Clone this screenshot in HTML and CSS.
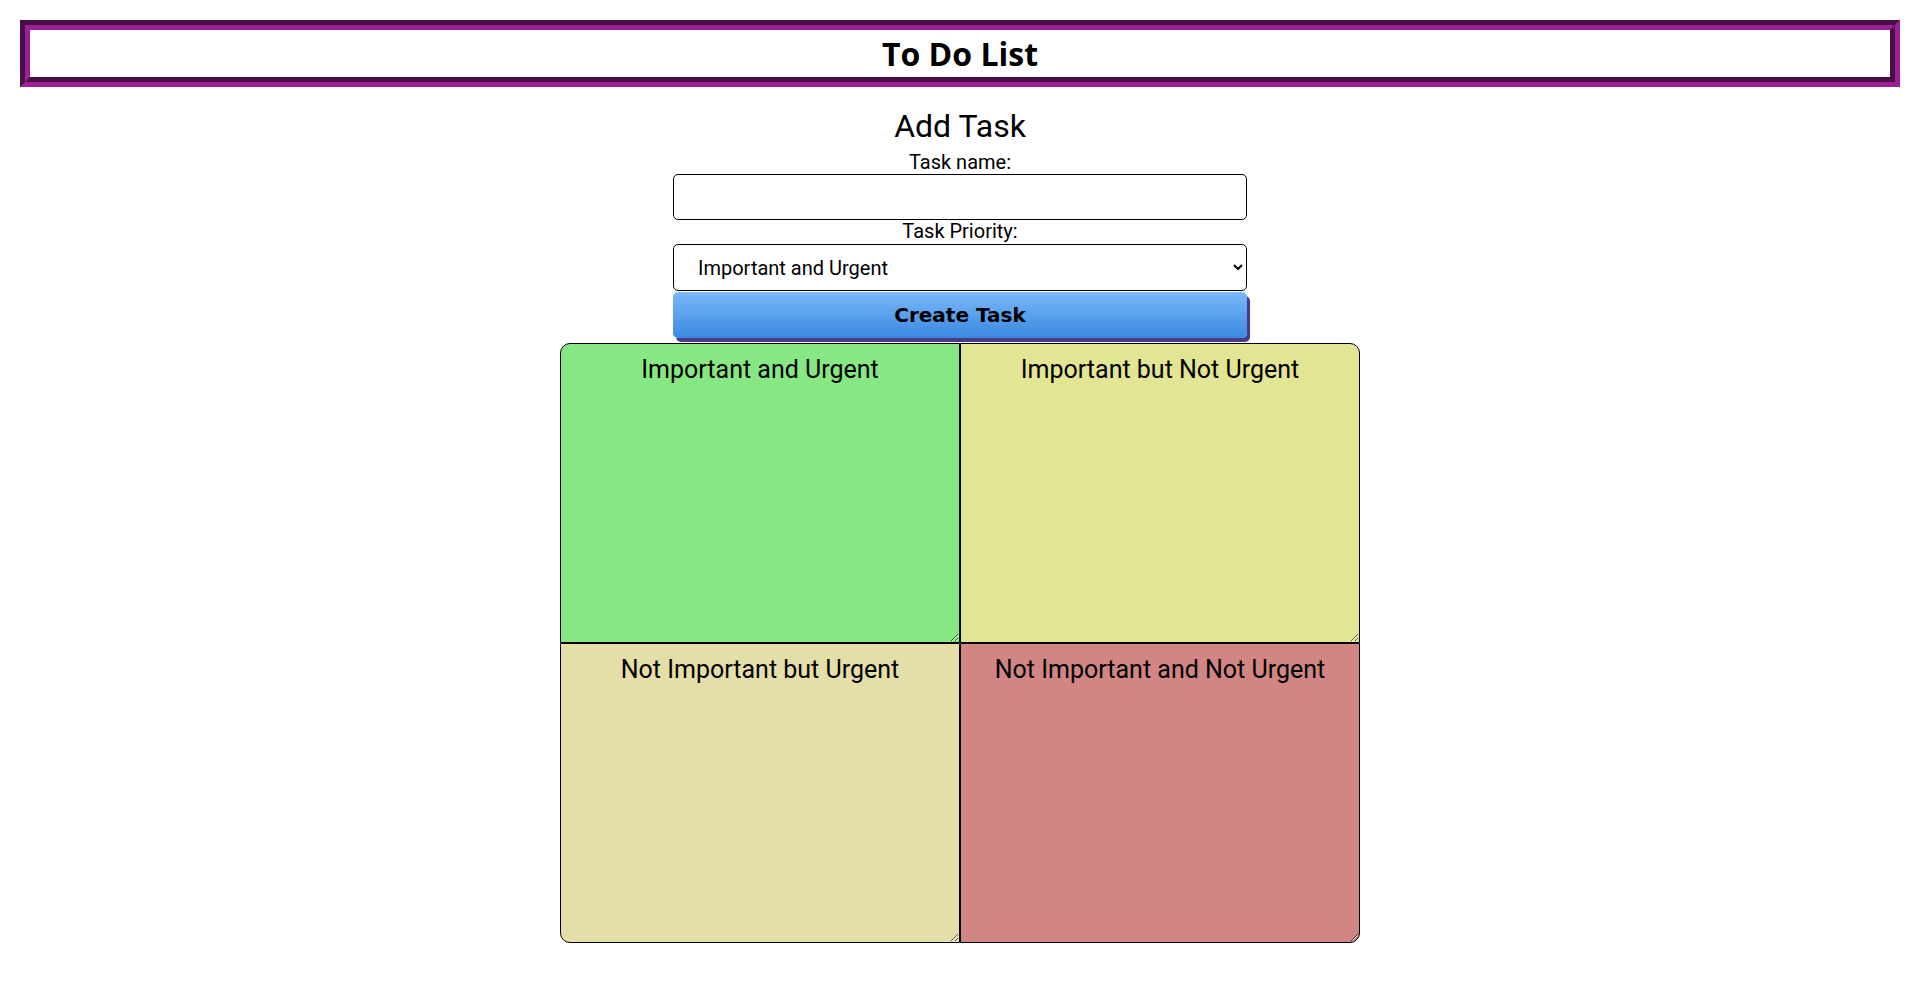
FILE: index.html
```html
<!DOCTYPE html>
<html lang="en">
<head>
<meta charset="utf-8">
<title>To Do List</title>
<link rel="stylesheet" href="styles.css">
</head>
<body>
<header class="site-header">
  <h1 class="site-title">To Do List</h1>
</header>
<main class="page">
  <form class="task-form">
    <h2 class="form-title">Add Task</h2>
    <label class="form-label" for="task-name">Task name:</label>
    <input class="form-input" id="task-name" type="text">
    <label class="form-label" for="task-priority">Task Priority:</label>
    <select class="form-select" id="task-priority">
      <option>Important and Urgent</option>
      <option>Important but Not Urgent</option>
      <option>Not Important but Urgent</option>
      <option>Not Important and Not Urgent</option>
    </select>
    <button class="form-button" type="button">Create Task</button>
  </form>
  <section class="matrix">
    <div class="quadrant q-iu"><h3 class="quadrant-title">Important and Urgent</h3></div>
    <div class="quadrant q-inu"><h3 class="quadrant-title">Important but Not Urgent</h3></div>
    <div class="quadrant q-niu"><h3 class="quadrant-title">Not Important but Urgent</h3></div>
    <div class="quadrant q-ninu"><h3 class="quadrant-title">Not Important and Not Urgent</h3></div>
  </section>
</main>
</body>
</html>
```

FILE: styles.css
```css
html, body {
  background: #ffffff;
}

body {
  margin: 20px;
  font-family: Roboto, "Liberation Sans", sans-serif;
  font-size: 20px;
  color: #000000;
}

.site-header {
  border: 10px groove #9c1f97;
  text-align: center;
}

.site-title {
  margin: 0;
  font-family: "Open Sans", "Noto Sans", sans-serif;
  font-weight: 700;
  font-size: 32px;
  line-height: 47px;
}

.page {
  display: flex;
  flex-direction: column;
  align-items: center;
}

.task-form {
  display: flex;
  flex-direction: column;
  align-items: center;
  width: 574px;
}

.form-title {
  margin: 22px 0 7px;
  font-size: 32px;
  font-weight: 400;
  line-height: 35px;
}

.form-label {
  display: block;
  line-height: 23px;
  height: 23px;
}

.form-input {
  box-sizing: border-box;
  width: 100%;
  height: 46px;
  margin: 0;
  border: 1px solid #000000;
  border-radius: 5px;
  background: #ffffff;
  font-family: Roboto, sans-serif;
  font-size: 20px;
}

.form-select {
  box-sizing: border-box;
  width: 100%;
  height: 47px;
  margin: 1px 0 0;
  padding: 0 4px 0 20px;
  border: 1px solid #000000;
  border-radius: 5px;
  background: #ffffff;
  color: #000000;
  font-family: Roboto, sans-serif;
  font-size: 20px;
}

.form-button {
  box-sizing: border-box;
  width: 100%;
  height: 46px;
  margin: 1px 0 5px;
  border: none;
  border-radius: 5px;
  background: linear-gradient(to bottom, #7ab9fa, #3a88e0);
  box-shadow: 3px 4px 0 #4a3a8c;
  color: #000000;
  font-family: "DejaVu Sans", Verdana, sans-serif;
  font-weight: 700;
  font-size: 20px;
}

.matrix {
  display: grid;
  grid-template-columns: 400px 400px;
  grid-template-rows: 300px 300px;
}

.quadrant {
  box-sizing: border-box;
  border: 1px solid #000000;
  overflow: auto;
  resize: both;
  text-align: center;
}

.quadrant-title {
  margin: 11px 0 0;
  font-size: 25px;
  font-weight: 400;
  line-height: 29px;
}

.q-iu {
  background: #85e883;
  border-top-left-radius: 10px;
}

.q-inu {
  background: #e2e593;
  border-top-right-radius: 10px;
}

.q-niu {
  background: #e4dfa8;
  border-bottom-left-radius: 10px;
}

.q-ninu {
  background: #d18684;
  border-bottom-right-radius: 10px;
}
```
